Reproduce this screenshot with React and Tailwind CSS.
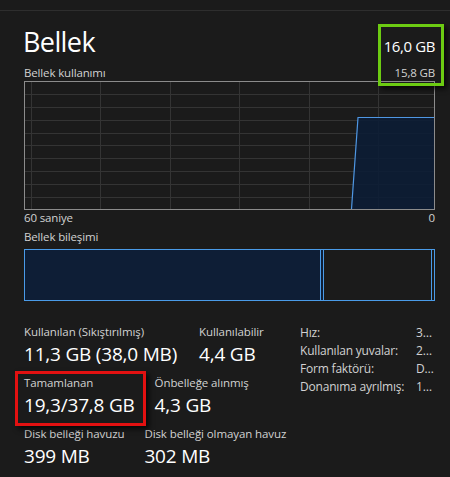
import React from 'react';

const gridX = [6, 75, 145, 214, 284, 353];
const gridY = [12.5, 25.5, 38.5, 51.5, 63.5, 76.5, 89.5, 102.5, 115.5];

const UsageChart = () => (
  <div className="w-[411px] h-[129px] border border-[#8c8c8c]">
    <svg width="409" height="127" viewBox="0 0 409 127" className="block">
      {gridX.map((x) => (
        <line key={`v${x}`} x1={x + 0.5} y1="0" x2={x + 0.5} y2="127" stroke="#343434" strokeWidth="1" />
      ))}
      {gridY.map((y) => (
        <line key={`h${y}`} x1="0" y1={y} x2="409" y2={y} stroke="#343434" strokeWidth="1" />
      ))}
      <polygon points="326.5,127 333,35.5 409,35.5 409,127" fill="#0b1c35" fillOpacity="0.88" />
      <polyline points="326.5,127 333,35.5 409,35.5" fill="none" stroke="#4f97e3" strokeWidth="1.2" />
    </svg>
  </div>
);

const CompositionBar = () => (
  <div className="flex w-[411px] h-[52px]">
    <div className="w-[297px] border border-[#4a9be8] bg-[#0e1e36]" />
    <div className="w-[3px] border-y border-r border-[#4a9be8] bg-[#0e1e36]" />
    <div className="w-[108px] border-y border-r border-[#4a9be8]" />
    <div className="w-[3px] border-y border-r border-[#4a9be8]" />
  </div>
);

const Stat = ({ label, value }) => (
  <div className="flex flex-col">
    <div className="text-[11.5px] leading-[16px] tracking-[-0.1px] text-[#d2d2d2] whitespace-nowrap">{label}</div>
    <div className="mt-[2px] text-[19px] leading-[24px] tracking-[-0.2px] text-white whitespace-nowrap">{value}</div>
  </div>
);

const specs = [
  ['Hız:', '3…'],
  ['Kullanılan yuvalar:', '2…'],
  ['Form faktörü:', 'D…'],
  ['Donanıma ayrılmış:', '1…'],
];

export default function App() {
  return (
    <div className="relative w-[450px] h-[477px] overflow-hidden bg-[#1b1b1b] text-white font-['Open_Sans',sans-serif]">
      <div className="h-[10px]" />
      <div className="h-px bg-[#2e2e2e]" />

      <div className="pl-[24px] pr-[15px]">
        <div className="mt-[17px] flex items-baseline justify-between">
          <h1 className="text-[27px] leading-[28px] tracking-[-0.6px] -ml-[1px]">Bellek</h1>
          <div className="text-[15px] leading-[20px] tracking-[-0.4px]">16,0 GB</div>
        </div>
        <div className="mt-[9px] flex items-baseline justify-between text-[11.5px] leading-[16px] tracking-[-0.15px] text-[#d2d2d2]">
          <span>Bellek kullanımı</span>
          <span>15,8 GB</span>
        </div>

        <UsageChart />

        <div className="flex w-[411px] justify-between text-[11.5px] leading-[16px] tracking-[-0.15px] text-[#d2d2d2]">
          <span>60 saniye</span>
          <span>0</span>
        </div>
        <div className="mt-[3px] text-[11.5px] leading-[16px] tracking-[-0.15px] text-[#d2d2d2]">Bellek bileşimi</div>
        <div className="mt-[4px]">
          <CompositionBar />
        </div>

        <div className="mt-[23px] flex items-start">
          <div className="w-[276px] flex flex-col gap-[9px]">
            <div className="flex gap-[22px]">
              <Stat label="Kullanılan (Sıkıştırılmış)" value="11,3 GB (38,0 MB)" />
              <Stat label="Kullanılabilir" value="4,4 GB" />
            </div>
            <div className="flex gap-[20px]">
              <Stat label="Tamamlanan" value="19,3/37,8 GB" />
              <Stat label="Önbelleğe alınmış" value="4,3 GB" />
            </div>
            <div className="flex gap-[20px]">
              <Stat label="Disk belleği havuzu" value="399 MB" />
              <Stat label="Disk belleği olmayan havuz" value="302 MB" />
            </div>
          </div>
          <div className="grid grid-cols-[116px_auto] content-start text-[12px] leading-[18px] tracking-[-0.2px] text-[#d2d2d2]">
            {specs.map(([k, v]) => (
              <React.Fragment key={k}>
                <span className="whitespace-nowrap">{k}</span>
                <span>{v}</span>
              </React.Fragment>
            ))}
          </div>
        </div>
      </div>

      <div className="absolute left-[378px] top-[24px] w-[66px] h-[62px] border-[3px] border-[#6ccb12] shadow-[3px_3px_5px_rgba(0,0,0,0.7)]" />
      <div className="absolute left-[15px] top-[371px] w-[131px] h-[55px] border-[3px] border-[#e31111] shadow-[3px_3px_5px_rgba(0,0,0,0.7)]" />
    </div>
  );
}
